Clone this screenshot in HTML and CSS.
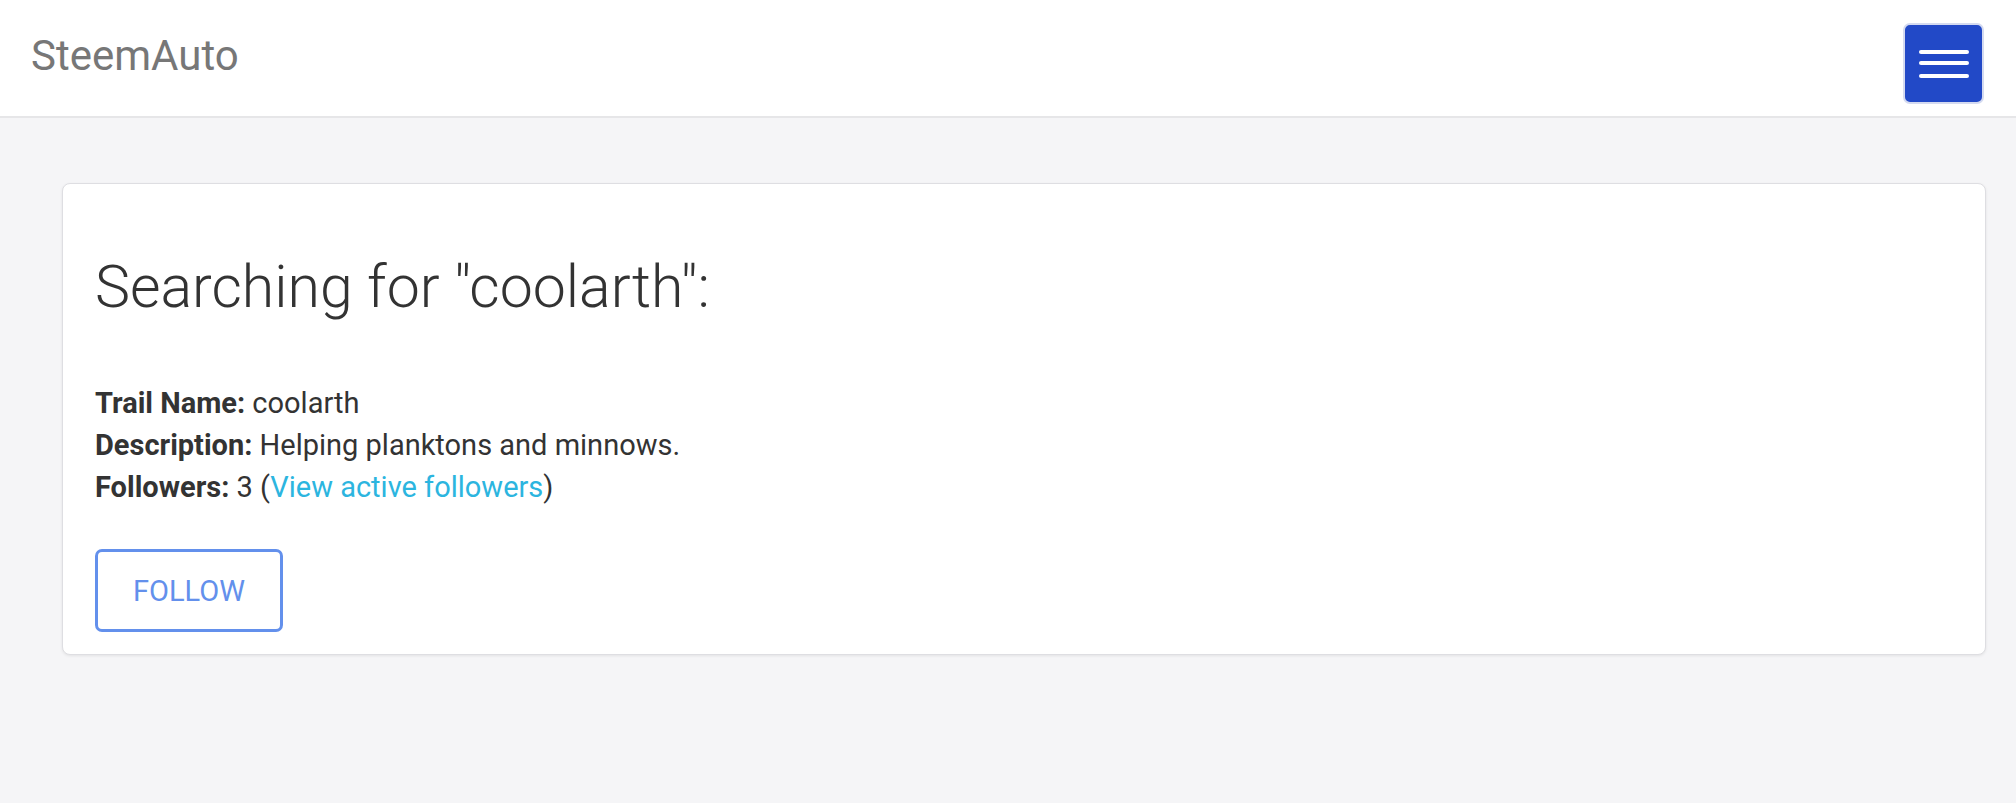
FILE: index.html
```html
<!DOCTYPE html>
<html lang="en">
<head>
<meta charset="utf-8">
<title>SteemAuto</title>
<link rel="stylesheet" href="styles.css">
</head>
<body>
<nav class="navbar">
  <a class="brand" href="#">SteemAuto</a>
  <button class="toggler" type="button" aria-label="Toggle navigation">
    <svg width="50" height="30" viewBox="0 0 50 30">
      <g stroke="#fff" stroke-width="4" stroke-linecap="round">
        <line x1="2" y1="3" x2="48" y2="3"/>
        <line x1="2" y1="14" x2="48" y2="14"/>
        <line x1="2" y1="27" x2="48" y2="27"/>
      </g>
    </svg>
  </button>
</nav>
<main class="main">
  <section class="card">
    <h1 class="title">Searching for "coolarth":</h1>
    <p class="info">
      <b>Trail Name:</b> coolarth<br>
      <b>Description:</b> Helping planktons and minnows.<br>
      <b>Followers:</b> 3 (<a class="link" href="#">View active followers</a>)
    </p>
    <button class="follow" type="button">FOLLOW</button>
  </section>
</main>
</body>
</html>
```
FILE: styles.css
```css
html, body {
  margin: 0;
  padding: 0;
}
body {
  background: #f5f5f7;
  font-family: Roboto, "Liberation Sans", sans-serif;
  color: #333;
  height: 803px;
  overflow: hidden;
}
.navbar {
  height: 116px;
  background: #fff;
  border-bottom: 2px solid #e6e6e8;
  display: flex;
  align-items: center;
  justify-content: space-between;
  padding: 0 32px 0 31px;
}
.brand {
  font-size: 42px;
  color: #777;
  text-decoration: none;
  margin-top: -6px;
}
.toggler {
  width: 81px;
  height: 81px;
  margin-top: 10px;
  background: #2249c7;
  border: 2px solid #d4daf0;
  border-radius: 7px;
  display: flex;
  align-items: center;
  justify-content: center;
  padding: 0;
}
.toggler svg {
  display: block;
  margin-top: 2px;
}
.main {
  padding: 65px 30px 0 62px;
}
.card {
  background: #fff;
  border: 1px solid #dedee2;
  border-radius: 8px;
  box-shadow: 0 1px 3px rgba(0,0,0,0.08);
  padding: 32px 32px 22px;
}
.title {
  font-weight: 300;
  font-size: 59px;
  line-height: 71px;
  margin: 35px 0 60px;
  color: #333;
}
.info {
  font-size: 29px;
  line-height: 42px;
  margin: 0 0 41px;
}
.info b {
  font-weight: 700;
}
.link {
  color: #2cb5df;
  text-decoration: none;
}
.follow {
  width: 188px;
  height: 83px;
  background: #fff;
  border: 3px solid #6390ec;
  border-radius: 7px;
  color: #6390ec;
  font-family: Roboto, "Liberation Sans", sans-serif;
  font-size: 29px;
  padding: 0;
  display: block;
}
```
